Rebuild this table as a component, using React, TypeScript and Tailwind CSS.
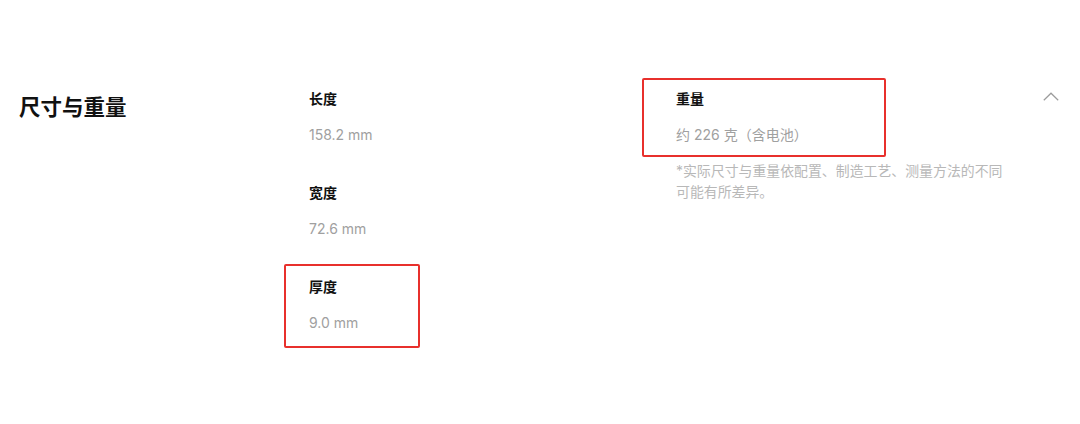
const FONT = "font-['Inter','Noto_Sans_CJK_SC',sans-serif]";

const LEFT_SPECS = [
  { label: "长度", value: "158.2 mm", marked: false },
  { label: "宽度", value: "72.6 mm", marked: false },
  { label: "厚度", value: "9.0 mm", marked: true },
];

function Spec({ label, value }: { label: string; value: string }) {
  return (
    <div className="flex flex-col gap-4">
      <p className="text-[14px] leading-5 font-bold text-[#111]">{label}</p>
      <p className="text-[14px] leading-5 text-[#a0a0a0]">{value}</p>
    </div>
  );
}

// red annotation frame drawn over an item
function Mark({ className }: { className: string }) {
  return <div className={`absolute border-2 border-[#e8302c] rounded-[2px] pointer-events-none ${className}`} />;
}

export default function App() {
  return (
    <div className={`w-[1080px] h-[424px] bg-white ${FONT}`}>
      <div className="flex items-start pt-[89px]">
        <div className="w-[309px] pl-[19px] pt-[3px]">
          <h2 className="text-[21.5px] leading-[30px] font-bold text-[#111]">尺寸与重量</h2>
        </div>

        <div className="w-[367px] flex flex-col gap-[38px]">
          {LEFT_SPECS.map((s) => (
            <div key={s.label} className="relative">
              <Spec label={s.label} value={s.value} />
              {s.marked && <Mark className="left-[-25px] top-[-13px] w-[136px] h-[84px]" />}
            </div>
          ))}
        </div>

        <div className="w-[367px] flex flex-col">
          <div className="relative">
            <Spec label="重量" value="约 226 克（含电池）" />
            <Mark className="left-[-34px] top-[-11px] w-[244px] h-[79px]" />
          </div>
          <p className="mt-[16px] text-[13.9px] leading-[21px] text-[#b8b8b8]">
            *实际尺寸与重量依配置、制造工艺、测量方法的不同
            <br />
            可能有所差异。
          </p>
        </div>

        <div className="pt-[3px]">
          <svg width="16" height="9" viewBox="0 0 16 9" fill="none" className="text-[#9c9c9c]">
            <polyline points="0.8,8.2 8,1.2 15.2,8.2" stroke="currentColor" strokeWidth="1.2" />
          </svg>
        </div>
      </div>
    </div>
  );
}
